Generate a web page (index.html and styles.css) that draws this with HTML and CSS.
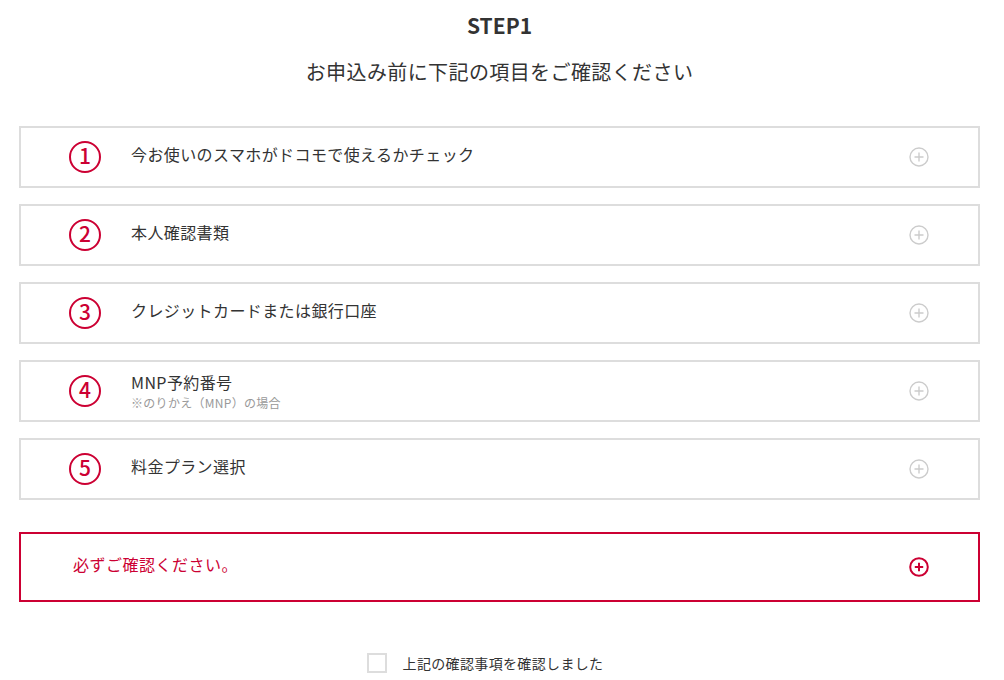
FILE: index.html
```html
<!DOCTYPE html>
<html lang="ja">
<head>
<meta charset="UTF-8">
<meta name="viewport" content="width=device-width, initial-scale=1.0">
<title>STEP1</title>
<link rel="stylesheet" href="styles.css">
</head>
<body>
    <div class="page">
        <h1 class="step-title">STEP1</h1>
        <p class="step-lead">お申込み前に下記の項目をご確認ください</p>

        <div class="check-list">
            <div class="check-item">
                <span class="num">1</span>
                <div class="label">今お使いのスマホがドコモで使えるかチェック</div>
                <svg class="plus" width="20" height="20" viewBox="0 0 20 20"><circle cx="10" cy="10" r="9" /><path d="M10 5.5v9M5.5 10h9" /></svg>
            </div>
            <div class="check-item">
                <span class="num">2</span>
                <div class="label">本人確認書類</div>
                <svg class="plus" width="20" height="20" viewBox="0 0 20 20"><circle cx="10" cy="10" r="9" /><path d="M10 5.5v9M5.5 10h9" /></svg>
            </div>
            <div class="check-item">
                <span class="num">3</span>
                <div class="label">クレジットカードまたは銀行口座</div>
                <svg class="plus" width="20" height="20" viewBox="0 0 20 20"><circle cx="10" cy="10" r="9" /><path d="M10 5.5v9M5.5 10h9" /></svg>
            </div>
            <div class="check-item">
                <span class="num">4</span>
                <div class="label label-two">
                    MNP予約番号
                    <span class="note">※のりかえ（MNP）の場合</span>
                </div>
                <svg class="plus" width="20" height="20" viewBox="0 0 20 20"><circle cx="10" cy="10" r="9" /><path d="M10 5.5v9M5.5 10h9" /></svg>
            </div>
            <div class="check-item">
                <span class="num">5</span>
                <div class="label">料金プラン選択</div>
                <svg class="plus" width="20" height="20" viewBox="0 0 20 20"><circle cx="10" cy="10" r="9" /><path d="M10 5.5v9M5.5 10h9" /></svg>
            </div>
        </div>

        <div class="notice">
            <div class="notice-text">必ずご確認ください。</div>
            <svg class="plus plus-red" width="20" height="20" viewBox="0 0 20 20"><circle cx="10" cy="10" r="8.8" /><path d="M10 5.8v8.4M5.8 10h8.4" /></svg>
        </div>

        <label class="agree">
            <span class="box"></span>
            <span class="agree-text">上記の確認事項を確認しました</span>
        </label>
    </div>
</body>
</html>
```

FILE: styles.css
```css
body {
    margin: 0;
    padding: 0;
    background-color: #fff;
    color: #333;
    font-family: "Noto Sans CJK JP", "Noto Sans", sans-serif;
}
.page {
    width: 961px;
    margin-left: 19px;
    padding-top: 10px;
}
.step-title {
    margin: 0;
    font-size: 21px;
    line-height: 30px;
    font-weight: bold;
    text-align: center;
}
.step-lead {
    margin: 17px 0 0;
    font-size: 20px;
    line-height: 30px;
    letter-spacing: 0.4px;
    text-align: center;
}
.check-list {
    margin-top: 39px;
    display: flex;
    flex-direction: column;
    gap: 16px;
}
.check-item {
    height: 62px;
    box-sizing: border-box;
    border: 2px solid #dddddd;
    display: flex;
    align-items: center;
    padding: 0 49px 0 48px;
}
.num {
    width: 32px;
    height: 32px;
    box-sizing: border-box;
    border: 2px solid #cc0033;
    border-radius: 50%;
    color: #cc0033;
    font-size: 21px;
    font-weight: 500;
    line-height: 25px;
    text-align: center;
    flex-shrink: 0;
}
.label {
    margin-left: 30px;
    padding-bottom: 6px;
    font-size: 16px;
    line-height: 20px;
    letter-spacing: 0.4px;
    display: flex;
    flex-direction: column;
}
.label-two {
    padding-bottom: 0;
}
.note {
    margin-top: 3px;
    font-size: 12px;
    line-height: 16px;
    letter-spacing: 0.3px;
    color: #999;
}
.plus {
    margin-left: auto;
    fill: none;
    stroke: #cccccc;
    stroke-width: 1.4;
    flex-shrink: 0;
}
.plus-red {
    stroke: #cc0033;
    stroke-width: 2;
}
.notice {
    margin-top: 32px;
    height: 70px;
    box-sizing: border-box;
    border: 2px solid #cc0033;
    display: flex;
    align-items: center;
    padding: 0 49px 0 52px;
}
.notice-text {
    padding-bottom: 6px;
    color: #cc0033;
    font-size: 16px;
    letter-spacing: 0.5px;
}
.agree {
    margin-top: 51px;
    display: flex;
    align-items: center;
    justify-content: center;
    gap: 16px;
    padding-right: 29px;
}
.box {
    width: 20px;
    height: 20px;
    box-sizing: border-box;
    border: 2px solid #dddddd;
}
.agree-text {
    font-size: 14px;
    letter-spacing: 0.35px;
}
```
